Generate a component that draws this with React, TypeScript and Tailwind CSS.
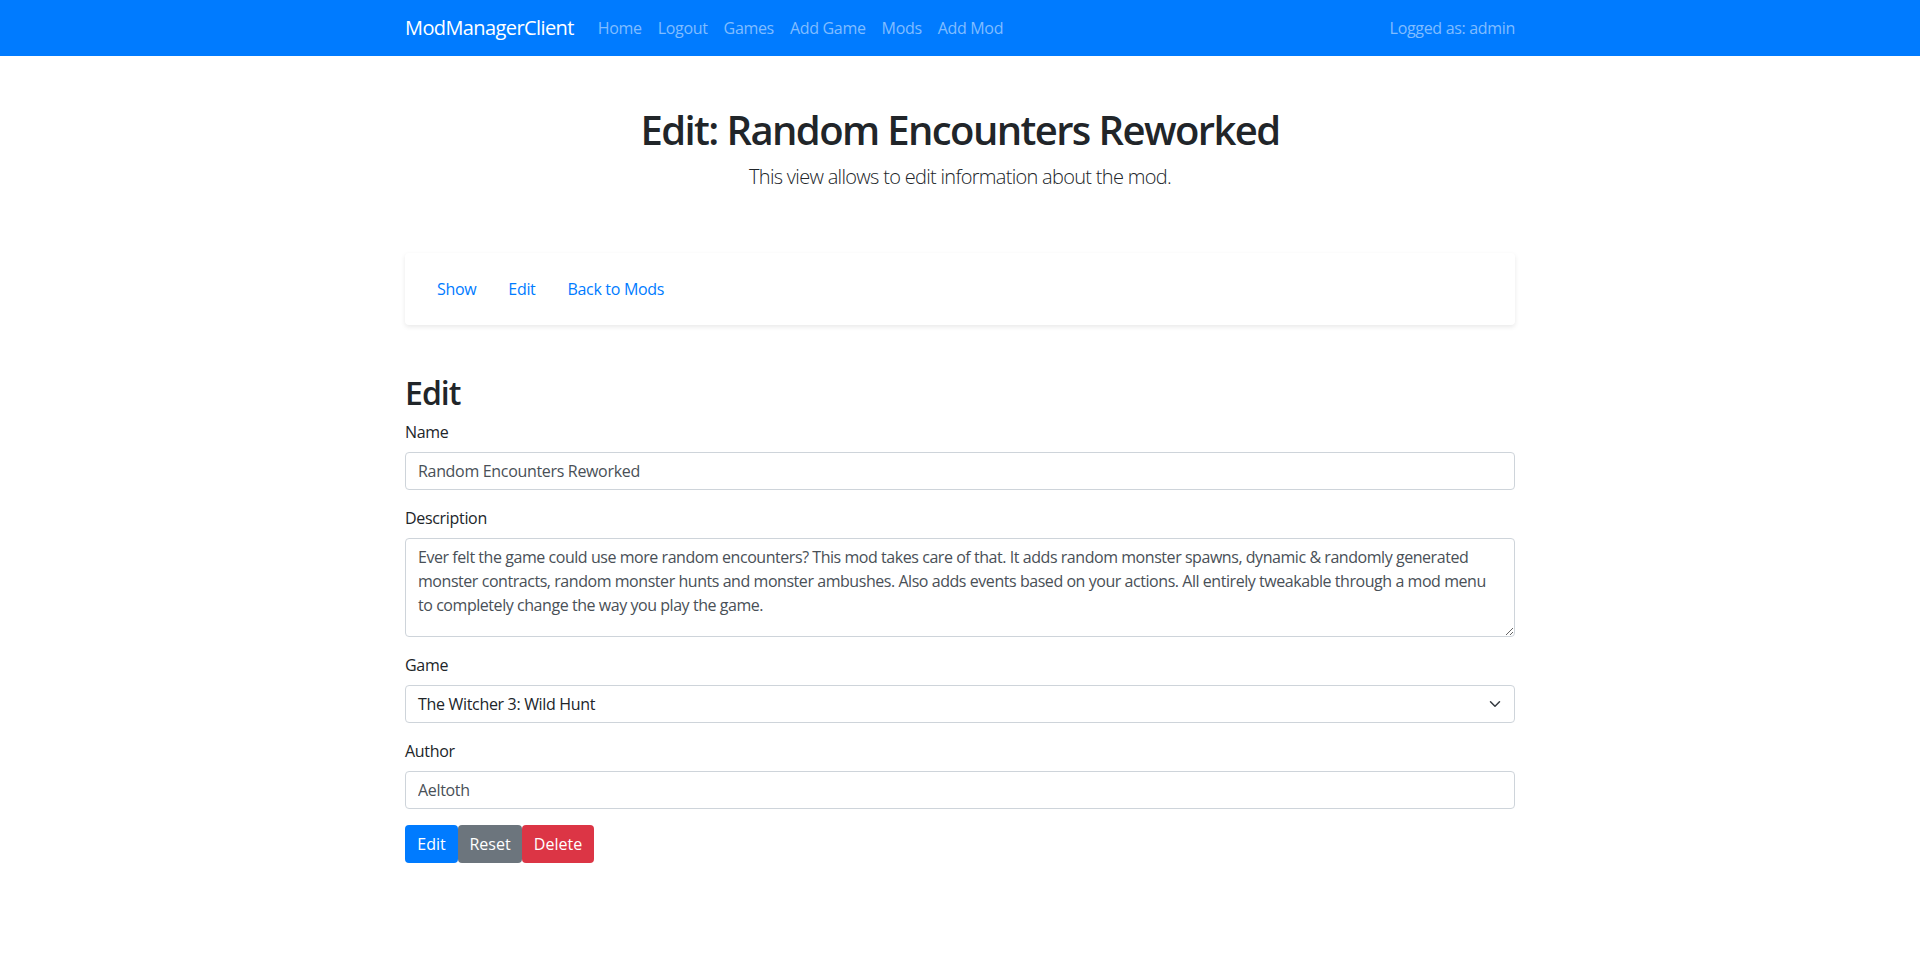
import React from 'react';

const NAV_LINKS = ['Home', 'Logout', 'Games', 'Add Game', 'Mods', 'Add Mod'];

const DESCRIPTION =
  'Ever felt the game could use more random encounters? This mod takes care of that. It adds random monster spawns, dynamic & randomly generated monster contracts, random monster hunts and monster ambushes. Also adds events based on your actions. All entirely tweakable through a mod menu to completely change the way you play the game.';

const inputCls =
  'block w-full h-[38px] px-3 py-1.5 text-base leading-6 tracking-[-0.02em] text-[#495057] bg-white border border-[#ced4da] rounded outline-none';

export default function App() {
  return (
    <div
      className="min-h-screen bg-white text-[#212529] text-base leading-6 tracking-[-0.02em]"
      style={{ fontFamily: '"Open Sans", "Noto Sans", sans-serif' }}
    >
      {/* Navbar */}
      <nav className="bg-[#007bff] py-2">
        <div className="w-[1140px] mx-auto px-[15px] flex items-center">
          <span className="text-white text-xl leading-[30px] py-[5px] mr-4 tracking-[-0.03em]">ModManagerClient</span>
          <ul className="flex">
            {NAV_LINKS.map(link => (
              <li key={link} className="px-2 py-2 text-[#80bdff]">{link}</li>
            ))}
          </ul>
          <span className="ml-auto text-[#80bdff]">Logged as: admin</span>
        </div>
      </nav>

      <div className="w-[1140px] mx-auto px-[15px]">

        {/* Header */}
        <div className="text-center pt-[50px]">
          <h1 className="text-[40px] leading-[48px] font-semibold tracking-[-0.04em] mb-2">Edit: Random Encounters Reworked</h1>
          <p className="text-xl leading-[30px] font-light tracking-[-0.035em] mb-[61px]">This view allows to edit information about the mod.</p>
        </div>

        {/* Sub nav card */}
        <div className="bg-white rounded shadow-[0_2px_5px_rgba(0,0,0,0.09)] p-4 mb-[49px]">
          <ul className="flex">
            <li className="px-4 py-2 text-[#007bff]">Show</li>
            <li className="px-4 py-2 text-[#007bff]">Edit</li>
            <li className="px-4 py-2 text-[#007bff]">Back to Mods</li>
          </ul>
        </div>

        {/* Form */}
        <h2 className="text-[32px] leading-[38px] font-semibold tracking-[-0.03em] mb-2">Edit</h2>

        <div className="mb-4">
          <label className="block mb-2">Name</label>
          <input className={inputCls} defaultValue="Random Encounters Reworked" />
        </div>

        <div className="mb-4">
          <label className="block mb-2">Description</label>
          <textarea
            className="block w-full h-[99px] px-3 py-1.5 text-base leading-6 tracking-[-0.028em] text-[#495057] bg-white border border-[#ced4da] rounded outline-none"
            defaultValue={DESCRIPTION}
          />
        </div>

        <div className="mb-4">
          <label className="block mb-2">Game</label>
          <div className="relative">
            <div className="w-full h-[38px] px-3 py-1.5 text-[#212529] border border-[#ced4da] rounded bg-white">
              The Witcher 3: Wild Hunt
            </div>
            <svg className="absolute right-3 top-[13px]" width="16" height="12" viewBox="0 0 16 16" fill="none">
              <path d="M2 5l6 6 6-6" stroke="#343a40" strokeWidth="2" strokeLinecap="round" strokeLinejoin="round" />
            </svg>
          </div>
        </div>

        <div className="mb-4">
          <label className="block mb-2">Author</label>
          <input className={inputCls} defaultValue="Aeltoth" />
        </div>

        <div className="flex tracking-normal">
          <button className="h-[38px] w-[53px] text-white bg-[#007bff] rounded">Edit</button>
          <button className="h-[38px] w-[64px] text-white bg-[#6c757d] rounded">Reset</button>
          <button className="h-[38px] w-[72px] text-white bg-[#dc3545] rounded">Delete</button>
        </div>
      </div>
    </div>
  );
}
